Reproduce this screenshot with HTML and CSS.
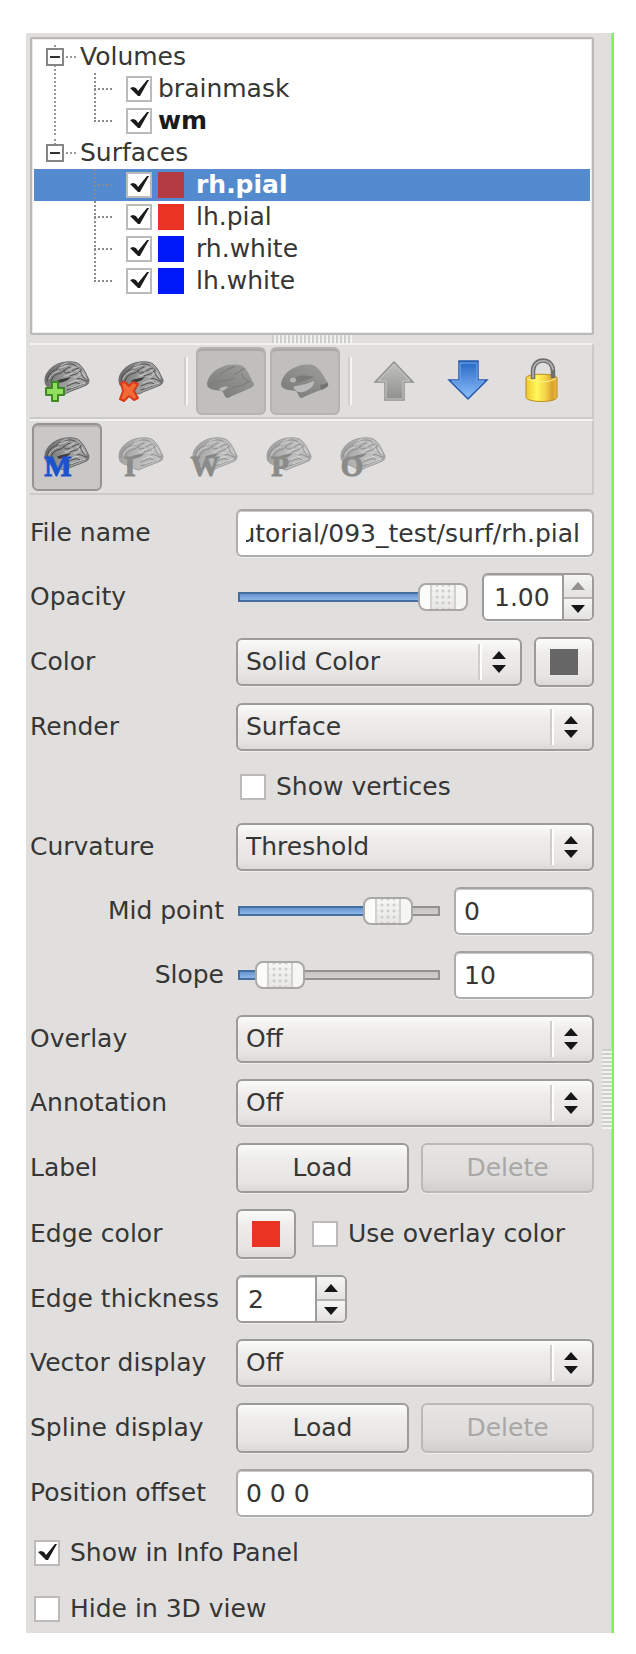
FILE: index.html
```html
<!DOCTYPE html>
<html lang="en">
<head>
<meta charset="utf-8">
<title>Surface layers</title>
<link rel="stylesheet" href="styles.css">
</head>
<body>
<svg class="defs" aria-hidden="true">
  <defs>
    <linearGradient id="g-brain" x1="0" y1="0.3" x2="1" y2="0.5">
      <stop offset="0" stop-color="#666"/><stop offset="0.45" stop-color="#999"/><stop offset="0.9" stop-color="#a6a6a6"/><stop offset="1" stop-color="#777"/>
    </linearGradient>
    <linearGradient id="g-smooth" x1="0" y1="1" x2="0.8" y2="0">
      <stop offset="0" stop-color="#777776"/><stop offset="1" stop-color="#9b9b9a"/>
    </linearGradient>
    <linearGradient id="g-up" x1="0" y1="0" x2="0" y2="1">
      <stop offset="0" stop-color="#c2c2c0"/><stop offset="1" stop-color="#8f8f8d"/>
    </linearGradient>
    <linearGradient id="g-down" x1="0" y1="0" x2="0" y2="1">
      <stop offset="0" stop-color="#2566c4"/><stop offset="1" stop-color="#8fc0fa"/>
    </linearGradient>
    <linearGradient id="g-lock" x1="0" y1="0" x2="1" y2="0">
      <stop offset="0" stop-color="#f0c62c"/><stop offset="0.35" stop-color="#fff75a"/><stop offset="0.65" stop-color="#f3cf45"/><stop offset="0.85" stop-color="#d9a02e"/><stop offset="1" stop-color="#eebf3c"/>
    </linearGradient>
    <symbol id="brain" viewBox="0 0 48 48">
      <path d="M2 23C2 16 8 10 15 7C22 4 32 4 36 7C41 11 43 17 46 23C46 27 44 28 41 29C35 32 29 33 22 37C18 37 14 33 10 32C5 31 2 29 2 23Z" fill="url(#g-brain)" stroke="#6a6a6a" stroke-width="1"/>
      <g fill="none" stroke="#4a4a4a" stroke-width="1" stroke-linecap="round">
        <path d="M4 24C5 18 8 15 12 13"/><path d="M8 25C9 19 13 17 18 16C21 14 23 11 27 10"/>
        <path d="M13 13C14 10 18 9 22 7"/><path d="M23 8C26 6 31 7 33 9"/>
        <path d="M29 14C32 13 33 11 36 11"/><path d="M27 19C31 17 34 18 37 14"/>
        <path d="M38 12C37 18 40 19 42 22"/><path d="M34 22C37 20 40 24 44 24"/>
        <path d="M24 29C29 27 33 24 37 27"/><path d="M24 33C30 31 35 29 40 27"/>
        <path d="M21 13C20 16 24 17 27 15"/>
      </g>
      <g fill="none" stroke="#d0d0cf" stroke-width="0.9" stroke-linecap="round">
        <path d="M6 22C8 17 12 15 16 14"/><path d="M16 11C20 11 22 9 25 8"/>
        <path d="M26 13C29 13 29 9 32 10"/><path d="M31 20C35 21 36 17 38 17"/>
        <path d="M26 26C31 25 33 22 36 24"/><path d="M39 15C40 17 42 19 43 21"/>
        <path d="M28 31C33 29 36 28 42 26"/><path d="M22 19C25 19 27 17 30 16"/>
        <path d="M33 14C35 13 37 15 36 17"/><path d="M18 9C20 8 21 7 23 6"/>
      </g>
      <path d="M14 24C18 21 22 22 28 20C25 24 20 25 16 26Z" fill="#3c3c3c"/>
    </symbol>
  </defs>
</svg>

<main class="panel">
  <div class="content">
    <ul class="tree" aria-label="Layers">
      <li class="group group-linked">
        <div class="row"><button class="expander" type="button" aria-label="Collapse Volumes"></button><span>Volumes</span></div>
        <ul>
          <li class="row leaf"><label><input type="checkbox" checked>brainmask</label></li>
          <li class="row leaf"><label><input type="checkbox" checked><b>wm</b></label></li>
        </ul>
      </li>
      <li class="group">
        <div class="row row-end"><button class="expander" type="button" aria-label="Collapse Surfaces"></button><span>Surfaces</span></div>
        <ul>
          <li class="row leaf selected"><label><input type="checkbox" checked><i class="swatch crimson"></i><b>rh.pial</b></label></li>
          <li class="row leaf"><label><input type="checkbox" checked><i class="swatch red"></i>lh.pial</label></li>
          <li class="row leaf"><label><input type="checkbox" checked><i class="swatch blue"></i>rh.white</label></li>
          <li class="row leaf"><label><input type="checkbox" checked><i class="swatch blue"></i>lh.white</label></li>
        </ul>
      </li>
    </ul>
    <div class="grip-h"></div>

    <div class="toolbar" role="toolbar" aria-label="Surface actions">
      <button type="button" class="tool" aria-label="Add surface">
        <svg viewBox="0 0 48 48"><use href="#brain"/><path d="M9 25h6v6h6v7h-6v6H9v-6H3v-7h6z" fill="#93de5c" stroke="#3c8a24" stroke-width="2" stroke-linejoin="round"/></svg>
      </button>
      <button type="button" class="tool" aria-label="Remove surface">
        <svg viewBox="0 0 48 48"><use href="#brain"/><path d="M4 26L8 25L12 29L16 25L21 27L17 34L21 41L17 43L12 39L7 44L3 42L6 34Z" fill="#f26a35" stroke="#d83a1c" stroke-width="2" stroke-linejoin="round"/></svg>
      </button>
      <span class="sep"></span>
      <button type="button" class="tool pressed-flat" aria-label="Pial surface" aria-pressed="true">
        <svg viewBox="0 0 48 48"><path d="M0 27C1 19 7 13 15 10C21 7 30 7 36 9C41 13 43 20 47 27C47 30 44 31 41 32C35 35 26 38 21 41C17 41 18 37 15 34C9 33 0 33 0 27Z" fill="url(#g-smooth)"/><path d="M12 32C14 30 18 29 21 30C19 32 17 34 14 34Z" fill="#b9b9b8"/><g fill="none" stroke="#7f7f7e" stroke-width="1.3" stroke-linecap="round"><path d="M4 27C11 22 17 26 27 21"/><path d="M12 17C19 15 21 11 27 10"/><path d="M28 17C33 16 33 12 37 12"/><path d="M25 31C31 28 36 30 41 25"/><path d="M35 17C36 22 39 23 43 25"/></g></svg>
      </button>
      <button type="button" class="tool pressed-flat" aria-label="White surface" aria-pressed="true">
        <svg viewBox="0 0 48 48"><path d="M0 27C1 19 7 13 15 10C21 7 30 7 34 9C40 13 43 20 47 26C48 29 46 31 42 32C35 35 26 38 21 41C17 41 18 37 15 34C9 33 0 33 0 27Z" fill="url(#g-smooth)"/><path d="M12 30C18 28 24 28 33 24C34 29 28 33 22 35C17 36 14 34 12 30Z" fill="#bababa"/><ellipse cx="12" cy="23" rx="3" ry="2.5" fill="#b4b4b3"/><path d="M15 20C20 18 26 18 33 20C26 23 22 24 16 26Z" fill="#7b7b7a"/><path d="M39 28L47 26C48 29 45 31 40 33Z" fill="#737372"/></svg>
      </button>
      <span class="sep"></span>
      <button type="button" class="tool" aria-label="Move up" disabled>
        <svg viewBox="0 0 48 48"><path d="M23 5L42 25H33V43H14V25H4Z" fill="url(#g-up)" stroke="#90908e" stroke-width="1.5"/><path d="M23 7L39 24H32V42H15V24H7Z" fill="none" stroke="#c9c9c7"/></svg>
      </button>
      <button type="button" class="tool" aria-label="Move down">
        <svg viewBox="0 0 48 48"><path d="M14 4H33V23H42L23 42L4 23H14Z" fill="url(#g-down)" stroke="#2759ab" stroke-width="1.5"/><path d="M15 6H32V24H39L23 40L7 24H15Z" fill="none" stroke="#75acef"/></svg>
      </button>
      <button type="button" class="tool" aria-label="Lock">
        <svg viewBox="0 0 48 48"><path d="M7 21C7 16 38 16 38 21V40C38 46 7 46 7 40Z" fill="url(#g-lock)" stroke="#bd8a1c"/><path d="M8 21C11 26 34 26 37 21" fill="none" stroke="#fdf09a"/><path d="M14 22V14C14 0 34 0 34 14V21" fill="none" stroke="#6f6f6f" stroke-width="4.5"/><path d="M14 21V14C14 1 33 0 34 13" fill="none" stroke="#b5b5b5" stroke-width="1.5"/></svg>
      </button>
    </div>

    <div class="toolbar" role="toolbar" aria-label="Surface type">
      <button type="button" class="tool pressed" aria-label="Main" aria-pressed="true">
        <svg viewBox="0 0 48 48"><use href="#brain"/><text class="glyph main" x="15" y="43">M</text></svg>
      </button>
      <button type="button" class="tool" aria-label="Inflated" disabled>
        <svg viewBox="0 0 48 48"><use class="dim" href="#brain"/><text class="glyph" x="13" y="43">I</text></svg>
      </button>
      <button type="button" class="tool" aria-label="White" disabled>
        <svg viewBox="0 0 48 48"><use class="dim" href="#brain"/><text class="glyph" x="14" y="43">W</text></svg>
      </button>
      <button type="button" class="tool" aria-label="Pial" disabled>
        <svg viewBox="0 0 48 48"><use class="dim" href="#brain"/><text class="glyph" x="15" y="43">P</text></svg>
      </button>
      <button type="button" class="tool" aria-label="Original" disabled>
        <svg viewBox="0 0 48 48"><use class="dim" href="#brain"/><text class="glyph" x="13" y="43">O</text></svg>
      </button>
    </div>

    <form class="form">
      <label for="file">File name</label>
      <input id="file" class="field path" type="text" value="tutorial/093_test/surf/rh.pial">

      <label for="opacity">Opacity</label>
      <div class="line">
        <input id="opacity" class="slider" type="range" min="0" max="100" value="100" style="--fill:90%">
        <div class="spin spin-wide">
          <input type="text" value="1.00" aria-label="Opacity value">
          <button type="button" aria-label="Increase opacity" disabled><svg viewBox="0 0 14 8"><path d="M0 8L7 0L14 8Z"/></svg></button>
          <button type="button" aria-label="Decrease opacity"><svg viewBox="0 0 14 8"><path d="M0 0L7 8L14 0Z"/></svg></button>
        </div>
      </div>

      <label for="color">Color</label>
      <div class="line">
        <div class="combo"><select id="color"><option>Solid Color</option></select><svg viewBox="0 0 14 22"><path d="M0 8L7 0L14 8ZM0 14L7 22L14 14Z"/></svg></div>
        <button type="button" class="button color" aria-label="Surface color"><i class="chip grey"></i></button>
      </div>

      <label for="render">Render</label>
      <div class="combo"><select id="render"><option>Surface</option></select><svg viewBox="0 0 14 22"><path d="M0 8L7 0L14 8ZM0 14L7 22L14 14Z"/></svg></div>

      <label class="check indent"><input type="checkbox">Show vertices</label>

      <label for="curv">Curvature</label>
      <div class="combo"><select id="curv"><option>Threshold</option></select><svg viewBox="0 0 14 22"><path d="M0 8L7 0L14 8ZM0 14L7 22L14 14Z"/></svg></div>

      <label class="sub" for="mid">Mid point</label>
      <div class="line">
        <input id="mid" class="slider" type="range" min="0" max="100" value="82" style="--fill:70%">
        <input class="field value" type="text" value="0" aria-label="Mid point value">
      </div>

      <label class="sub" for="slope">Slope</label>
      <div class="line">
        <input id="slope" class="slider" type="range" min="0" max="100" value="11" style="--fill:15%">
        <input class="field value" type="text" value="10" aria-label="Slope value">
      </div>

      <label for="overlay">Overlay</label>
      <div class="combo"><select id="overlay"><option>Off</option></select><svg viewBox="0 0 14 22"><path d="M0 8L7 0L14 8ZM0 14L7 22L14 14Z"/></svg></div>

      <label for="annot">Annotation</label>
      <div class="combo"><select id="annot"><option>Off</option></select><svg viewBox="0 0 14 22"><path d="M0 8L7 0L14 8ZM0 14L7 22L14 14Z"/></svg></div>

      <span>Label</span>
      <div class="line">
        <button type="button" class="button">Load</button>
        <button type="button" class="button" disabled>Delete</button>
      </div>

      <span>Edge color</span>
      <div class="line edge">
        <button type="button" class="button color" aria-label="Edge color"><i class="chip red"></i></button>
        <label class="check"><input type="checkbox">Use overlay color</label>
      </div>

      <label for="thick">Edge thickness</label>
      <div class="spin">
        <input id="thick" type="text" value="2">
        <button type="button" aria-label="Increase thickness"><svg viewBox="0 0 14 8"><path d="M0 8L7 0L14 8Z"/></svg></button>
        <button type="button" aria-label="Decrease thickness"><svg viewBox="0 0 14 8"><path d="M0 0L7 8L14 0Z"/></svg></button>
      </div>

      <label for="vector">Vector display</label>
      <div class="combo"><select id="vector"><option>Off</option></select><svg viewBox="0 0 14 22"><path d="M0 8L7 0L14 8ZM0 14L7 22L14 14Z"/></svg></div>

      <span>Spline display</span>
      <div class="line">
        <button type="button" class="button">Load</button>
        <button type="button" class="button" disabled>Delete</button>
      </div>

      <label for="offset">Position offset</label>
      <input id="offset" class="field" type="text" value="0 0 0">

      <label class="check wide"><input type="checkbox" checked>Show in Info Panel</label>
      <label class="check wide"><input type="checkbox">Hide in 3D view</label>
    </form>
  </div>
  <div class="grip-v"></div>
</main>
</body>
</html>
```
FILE: styles.css
```css
* { box-sizing: border-box; }

body {
  margin: 0;
  padding: 33px 22px 21px 26px;
  background: #fff;
  color: #363635;
  font: 25px/32px "DejaVu Sans", sans-serif;
}

ul { margin: 0; padding: 0; list-style: none; }
button, input, select { margin: 0; font: inherit; color: inherit; }
.defs { position: absolute; width: 0; height: 0; }

.panel {
  display: flex;
  background: #e0dfde;
  border-right: 2px solid #75fb4c;
  box-shadow: inset -1px 0 #d3c5d6;
}
.content { flex: 1; min-width: 0; padding: 4px 8px 4px 4px; }

/* Layer tree */
.tree {
  min-height: 298px;
  padding: 2px;
  border: 2px solid #bab9b7;
  border-radius: 2px;
  background: #fff;
  box-shadow: inset 0 0 0 1px #ecebea;
}
.row { display: flex; align-items: center; height: 32px; padding-left: 12px; }
.row > span { padding-left: 16px; }
.group-linked {
  background: repeating-linear-gradient(transparent 0 2px, #999 2px 4px) 20px 2px / 2px 100% no-repeat;
}
.row-end {
  background: repeating-linear-gradient(transparent 0 2px, #999 2px 4px) 20px 0 / 2px 8px no-repeat;
}
.expander {
  position: relative;
  width: 18px;
  height: 18px;
  padding: 0;
  border: 2px solid #858584;
  background: linear-gradient(#333, #333) center / 10px 2px no-repeat #fff;
}
.expander::after {
  content: "";
  position: absolute;
  left: 18px;
  top: 6px;
  width: 10px;
  height: 2px;
  background: repeating-linear-gradient(90deg, #999 0 2px, transparent 2px 4px);
}
.leaf { padding-left: 60px; }
.leaf::before {
  content: "";
  width: 20px;
  height: 100%;
  margin-right: 12px;
  background:
    repeating-linear-gradient(#8a8a8a 0 2px, transparent 2px 4px) 0 0 / 2px 100% no-repeat,
    repeating-linear-gradient(90deg, #8a8a8a 0 2px, transparent 2px 4px) 0 50% / 20px 2px no-repeat;
}
.leaf:last-child::before { background-size: 2px 50%, 20px 2px; }
.leaf label { display: flex; align-items: center; gap: 6px; }
.leaf b { color: #1a1a1a; }
.selected { background: #548bcf; }
.selected b { color: #fff; }
.swatch { width: 26px; height: 26px; margin-right: 6px; }
.crimson { background: #b43a44; }
.red { background: #ea3323; }
.blue { background: #0019fa; }
.grey { background: #666; }

input[type="checkbox"] {
  appearance: none;
  flex: none;
  width: 26px;
  height: 26px;
  border: 2px solid #bcbbba;
  background: #fff;
}
input[type="checkbox"]:checked::before {
  content: "";
  display: block;
  width: 22px;
  height: 22px;
  background: #1a1a1a;
  clip-path: polygon(2px 10px, 5px 9px, 8px 10px, 10px 13px, 19px 2px, 21px 2px, 17px 9px, 12px 18px, 10px 18px);
}

/* Splitter grips */
.grip-h {
  width: 80px;
  height: 8px;
  margin: 0 auto;
  background: repeating-linear-gradient(90deg, #cfcecd 0 2px, #f2f2f1 2px 4px);
}
.grip-v { display: flex; flex-direction: column; width: 10px; }
.grip-v::before {
  content: "";
  flex: none;
  height: 80px;
  margin-top: 1016px;
  background: repeating-linear-gradient(#cfcecd 0 2px, #f2f2f1 2px 4px);
}

/* Toolbars */
.toolbar {
  display: flex;
  gap: 4px;
  height: 76px;
  padding: 2px;
  border: solid;
  border-width: 2px 2px 2px 0;
  border-color: #f2f2f1 #cbcac9 #cbcac9;
}
.tool {
  display: grid;
  place-items: center;
  width: 70px;
  height: 68px;
  padding: 0;
  border: 2px solid transparent;
  border-radius: 6px;
  background: none;
}
.tool svg { width: 48px; height: 48px; overflow: visible; }
.pressed { border-color: #959493; background: #c9c8c7; box-shadow: inset 0 2px #b2b1b0; }
.pressed-flat { border-color: #b5b4b3; background: #c0bfbe; box-shadow: inset 0 2px #a9a8a7; }
.sep {
  width: 12px;
  height: 48px;
  margin: 10px 0;
  background: linear-gradient(90deg, #cfcecd 50%, #f5f5f4 50%) center / 4px 100% no-repeat;
}
.glyph {
  font: bold 29px "Liberation Serif", serif;
  text-anchor: middle;
  fill: #8b8b8a;
  stroke: #8b8b8a;
}
.glyph.main { fill: #1c52ce; stroke: #1c52ce; }
.dim { opacity: 0.55; }

/* Property form */
.form {
  display: grid;
  grid-template-columns: 194px minmax(0, 1fr);
  gap: 16px 12px;
  align-items: center;
  padding-top: 14px;
}
.form > label, .form > span { white-space: nowrap; }
.sub { justify-self: end; }
.line { display: flex; align-items: center; gap: 12px; }
.indent { grid-column: 2; padding-left: 4px; }
.wide { grid-column: 1 / -1; padding-left: 4px; }
.check { display: flex; align-items: center; gap: 10px; height: 40px; }
.edge { gap: 16px; }

.field, .spin {
  height: 48px;
  border: 2px solid #aeadac;
  border-top-color: #a5a4a3;
  border-radius: 6px;
  background: #fff;
  box-shadow: inset 0 1px #c8c8c7, 0 1px #efeeed;
}
.field { width: 100%; padding: 0 8px; }
.path { direction: rtl; padding: 0 12px 0 8px; }
.field.value { flex: none; width: 140px; }

.combo { display: grid; flex: 1; align-items: center; }
.combo > * { grid-area: 1 / 1; }
.combo svg { justify-self: end; width: 14px; height: 22px; margin-right: 16px; fill: #161616; pointer-events: none; }
select, .button {
  height: 48px;
  border: 2px solid #9c9b9a;
  border-radius: 6px;
  background: linear-gradient(#fbfbfa, #eeedec 30%, #e6e5e4 80%, #dad9d8);
  box-shadow: 0 1px #efeeed;
}
select {
  appearance: none;
  width: 100%;
  padding: 0 48px 0 8px;
  background:
    linear-gradient(90deg, #cfcecd 50%, #fff 50%) right 38px center / 4px 36px no-repeat,
    linear-gradient(#fbfbfa, #eeedec 30%, #e6e5e4 80%, #dad9d8);
}
.button { flex: 1; height: 50px; padding: 0; }
.button:disabled {
  color: #a9a8a7;
  border-color: #bab9b8;
  background: linear-gradient(#e6e5e4, #dddcdb 70%, #d0cfce);
}
.button.color { display: grid; place-items: center; flex: none; width: 60px; }
.chip { width: 28px; height: 26px; }

.slider {
  appearance: none;
  flex: 1;
  min-width: 0;
  height: 28px;
  margin: 0 2px;
  background:
    linear-gradient(#466f9f, #466f9f) 0 50% / 2px 10px no-repeat,
    linear-gradient(#466f9f 0 2px, #6894cd 2px, #8db7ea 8px, #466f9f 8px) 0 50% / var(--fill) 10px no-repeat,
    linear-gradient(#929190, #929190) 100% 50% / 2px 10px no-repeat,
    linear-gradient(#929190 0 2px, #c5c4c3 2px, #d2d1d0 8px, #929190 8px) 0 50% / 100% 10px no-repeat;
}
.slider::-webkit-slider-thumb {
  appearance: none;
  width: 50px;
  height: 28px;
  border: 2px solid #a9a8a7;
  border-radius: 8px;
  background:
    linear-gradient(90deg, #fbfbfa 10px, #d2d1d0 10px 12px, transparent 12px 34px, #d2d1d0 34px 36px, #f6f6f5 36px),
    radial-gradient(circle, #cfcecd 1px, transparent 2px) 14px 3px / 6px 6px,
    linear-gradient(#f6f6f5, #e8e7e6);
}

.spin {
  display: grid;
  grid-template: 1fr 1fr / 1fr 28px;
  justify-self: start;
  width: 111px;
  overflow: hidden;
  border-color: #9c9b9a;
}
.spin-wide { flex: none; width: 112px; }
.spin input {
  grid-row: 1 / 3;
  width: 100%;
  height: 100%;
  padding: 0 0 0 10px;
  border: 0;
  border-right: 2px solid #9c9b9a;
  background: none;
}
.spin button {
  grid-column: 2;
  display: grid;
  place-items: center;
  padding: 0;
  border: 0;
  background: linear-gradient(#f5f5f4, #e3e2e1);
}
.spin button:last-child { border-top: 2px solid #b5b4b3; }
.spin svg { width: 14px; height: 8px; fill: #161616; }
.spin button:disabled svg { fill: #929190; }
```
